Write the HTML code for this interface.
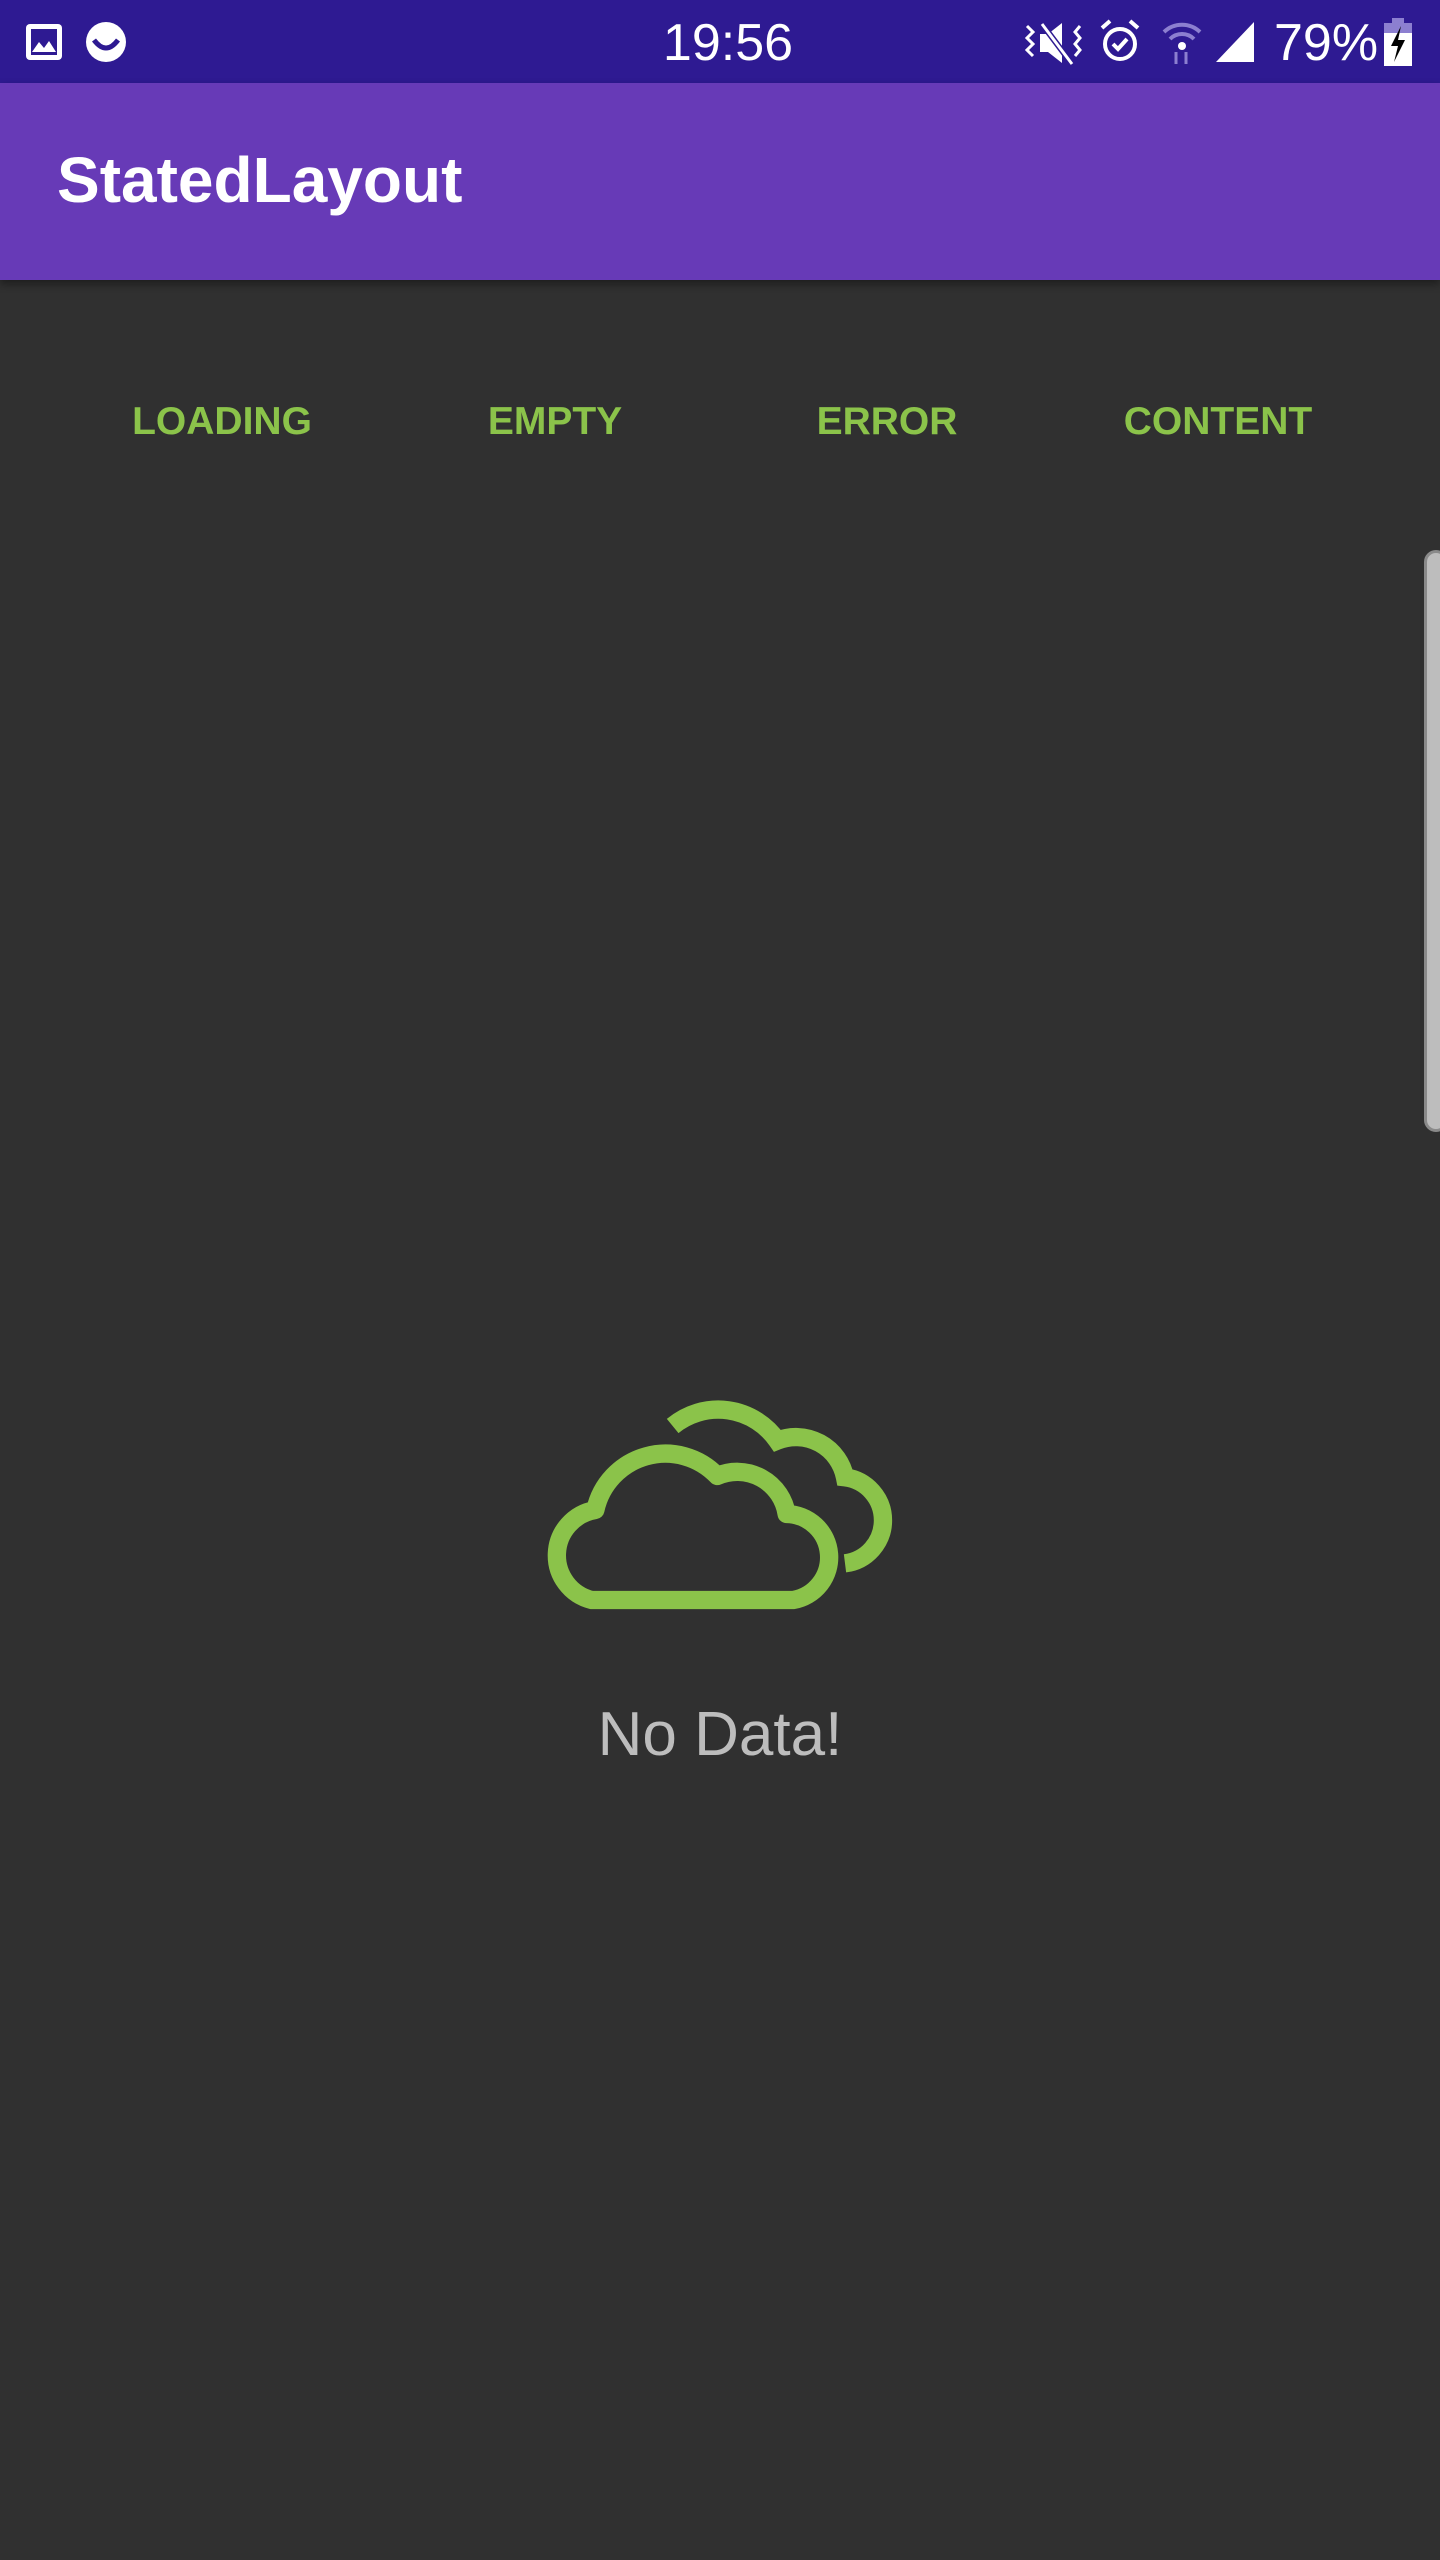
<!DOCTYPE html>
<html><head><meta charset="utf-8"><style>
html,body{margin:0;padding:0;}
body{width:1440px;height:2560px;background:#303030;position:relative;overflow:hidden;font-family:"Liberation Sans",sans-serif;}
.sb{position:absolute;left:0;top:0;width:1440px;height:83px;background:#2e1a92;color:#fff;}
.ab{position:absolute;left:0;top:83px;width:1440px;height:197px;background:#673ab7;box-shadow:0 4px 8px rgba(0,0,0,.4);}
.title{position:absolute;left:57px;top:64px;font-size:64px;font-weight:bold;color:#fff;line-height:66px;}
.btn{position:absolute;top:397px;width:300px;text-align:center;color:#8bc34a;font-weight:bold;font-size:39px;line-height:50px;}
.nd{position:absolute;left:0;width:1440px;top:1700px;text-align:center;color:#bdbdbd;font-size:62px;line-height:70px;}
</style></head><body>
<div class="sb">
  <svg style="position:absolute;left:24px;top:22px" width="40" height="40" viewBox="0 0 40 40"><rect x="2" y="2" width="36" height="36" rx="4" fill="#fff"/><rect x="7" y="7" width="26" height="26" fill="#2e1a92"/><path d="M8 30 L15 20 L20 26 L25 19 L32 30Z" fill="#fff"/></svg>
  <svg style="position:absolute;left:84px;top:20px" width="44" height="44" viewBox="0 0 44 44"><circle cx="22" cy="22" r="20" fill="#fff"/><path d="M10 20 Q22 36 34 20" fill="none" stroke="#2e1a92" stroke-width="5"/></svg>
  <div style="position:absolute;left:600px;width:256px;top:14px;text-align:center;font-size:52px;line-height:58px">19:56</div>
  <svg style="position:absolute;left:1022px;top:20px" width="66" height="46" viewBox="0 0 66 46"><path d="M18 14 H26 L40 3 V43 L26 32 H18Z" fill="#fff"/><path d="M20 4 L50 44" stroke="#2e1a92" stroke-width="6"/><path d="M20 4 L50 44" stroke="#fff" stroke-width="3"/><path d="M5 6 l6 6 -6 6 6 6 -6 6 6 6" fill="none" stroke="#fff" stroke-width="3"/><path d="M58 6 l-5 6 5 6 -5 6 5 6 -5 6" fill="none" stroke="#fff" stroke-width="3"/></svg>
  <svg style="position:absolute;left:1098px;top:18px" width="44" height="48" viewBox="0 0 44 48"><circle cx="22" cy="26" r="15" fill="none" stroke="#fff" stroke-width="4"/><path d="M15 26 l5 5 9-10" fill="none" stroke="#fff" stroke-width="4"/><path d="M4 10 L12 3 M40 10 L32 3" stroke="#fff" stroke-width="4"/></svg>
  <svg style="position:absolute;left:1160px;top:18px" width="44" height="48" viewBox="0 0 44 48"><path d="M4 14 A26 26 0 0 1 40 14" fill="none" stroke="#8c7fd0" stroke-width="4"/><path d="M10 21 A17 17 0 0 1 34 21" fill="none" stroke="#8c7fd0" stroke-width="4"/><circle cx="22" cy="28" r="4" fill="#fff"/><path d="M16 34 V46 M26 34 V46" stroke="#8c7fd0" stroke-width="3"/></svg>
  <svg style="position:absolute;left:1214px;top:20px" width="44" height="44" viewBox="0 0 44 44"><path d="M2 42 L40 2 V42Z" fill="#fff"/></svg>
  <div style="position:absolute;left:1274px;top:14px;font-size:52px;line-height:58px">79%</div>
  <svg style="position:absolute;left:1384px;top:18px" width="28" height="48" viewBox="0 0 28 48"><rect x="8" y="0" width="12" height="6" fill="#8c7fd0"/><rect x="0" y="5" width="28" height="12" fill="#8c7fd0"/><rect x="0" y="15" width="28" height="33" fill="#fff"/><path d="M17 8 L7 28 H14 L10 44 L21 22 H14Z" fill="#000"/></svg>
</div>
<div class="ab"><div class="title">StatedLayout</div></div>
<div class="btn" style="left:72px">LOADING</div>
<div class="btn" style="left:405px">EMPTY</div>
<div class="btn" style="left:737px">ERROR</div>
<div class="btn" style="left:1068px">CONTENT</div>
<div style="position:absolute;left:1424px;top:550px;width:24px;height:582px;border-radius:12px;background:#bdbdbd;border:3px solid #8a8a8a;box-sizing:border-box"></div>
<svg style="position:absolute;left:520px;top:1370px" width="400" height="400" viewBox="0 0 1200 1200">
<g fill="none" stroke="#8bc34a" stroke-width="55">
<path d="M215,690 L820,690 A130,130 0 0 0 800,432 A150,150 0 0 0 592,318 A215,215 0 0 0 226,420 A138,138 0 0 0 215,690 Z" stroke-linejoin="round"/>
<path d="M458,168 A215,215 0 0 1 772,212 A150,150 0 0 1 975,322 A130,130 0 0 1 975,580"/>
</g></svg>
<div class="nd">No Data!</div>
</body></html>
